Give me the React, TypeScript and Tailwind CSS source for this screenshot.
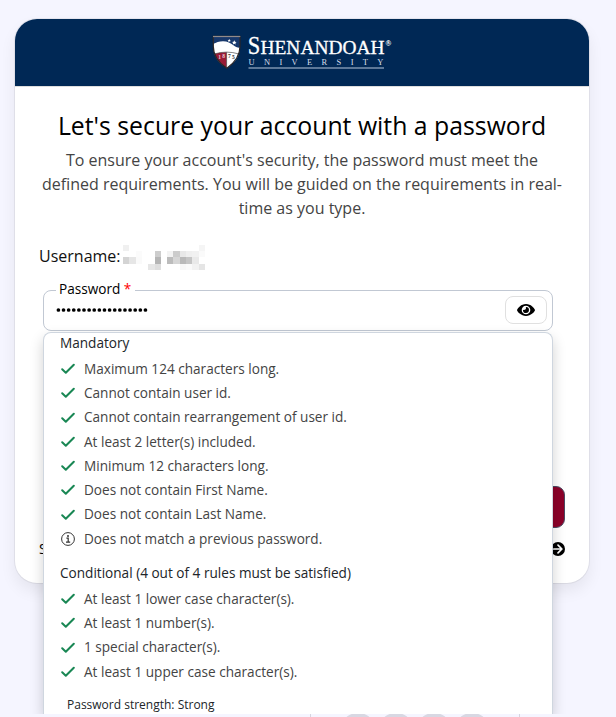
import React from "react";

const SANS = "font-['Open_Sans','Noto_Sans',sans-serif]";

type Rule = { text: string; info?: boolean };

const mandatory: Rule[] = [
  { text: "Maximum 124 characters long." },
  { text: "Cannot contain user id." },
  { text: "Cannot contain rearrangement of user id." },
  { text: "At least 2 letter(s) included." },
  { text: "Minimum 12 characters long." },
  { text: "Does not contain First Name." },
  { text: "Does not contain Last Name." },
  { text: "Does not match a previous password.", info: true },
];

const conditional: Rule[] = [
  { text: "At least 1 lower case character(s)." },
  { text: "At least 1 number(s)." },
  { text: "1 special character(s)." },
  { text: "At least 1 upper case character(s)." },
];

const pixels: [number, number, string][] = [
  [0, 0, "#f0f0f0"], [0, 2, "#d4d4d4"], [1, 2, "#e6e6e6"], [2, 2, "#fafafa"],
  [2, 1, "#fbfbfb"], [4, 3, "#e6e6e6"], [5, 3, "#dedede"], [5, 1, "#cdcdcd"], [5, 2, "#b5b5b5"],
  [7, 1, "#f3f3f3"], [7, 2, "#bcbcbc"], [8, 1, "#cccccc"], [8, 2, "#d6d6d6"],
  [9, 1, "#e8e8e8"], [9, 2, "#b9b9b9"], [10, 1, "#efefef"], [10, 2, "#c5c5c5"],
  [11, 1, "#f1f1f1"], [11, 2, "#e9e9e9"], [12, 0, "#f5f5f5"], [12, 1, "#fafafa"],
  [9, 3, "#f7f7f7"], [10, 3, "#fafafa"], [11, 3, "#f2f2f2"], [12, 3, "#e5e5e5"],
];

function Check() {
  return (
    <svg width="14" height="12" viewBox="0 0 14 12" fill="none" className="shrink-0">
      <path d="M1.200 6.200 4.800 9.700 12.800 1.700" stroke="#198754" strokeWidth="2" strokeLinecap="round" strokeLinejoin="round" />
    </svg>
  );
}

function Info() {
  return (
    <svg width="14" height="14" viewBox="0 0 14 14" fill="none" className="shrink-0">
      <circle cx="7" cy="7" r="6.400" stroke="#333" strokeWidth="1" />
      <circle cx="7" cy="3.900" r="1" fill="#333" />
      <path d="M5.400 6.200h1.800v4M5 10.200h4.200" stroke="#333" strokeWidth="1.200" />
    </svg>
  );
}

function RuleRow({ rule }: { rule: Rule }) {
  return (
    <li className="flex h-[24.25px] items-center gap-[9px] whitespace-nowrap text-[13.6px] text-[#444]">
      {rule.info ? <Info /> : <Check />}
      <span>{rule.text}</span>
    </li>
  );
}

function Logo() {
  return (
    <svg width="190" height="46" viewBox="0 -8 190 46" className="block">
      <defs>
        <clipPath id="shield">
          <path d="M1.300 1.300h26.700v10c0 11-6 17-13.200 21.900C7.500 28.500 1.300 22.500 1.300 11.300Z" />
        </clipPath>
      </defs>
      <g clipPath="url(#shield)">
        <rect width="30" height="36" fill="#fff" />
        <path d="M0 0h30v11.500c-2 1.800-4.500 1.500-7.500-.5-4-3-7-4.800-11.500-4.800C6.500 6.200 4 7.500 0 9.500Z" fill="#17386c" />
        <path d="M0 19.500Q7 17.300 14.500 17.300V36H0Z" fill="#981b36" />
        <path d="M2 19q12.500-3.800 25 0M14.600 17.300v16" stroke="#333" strokeWidth=".6" fill="none" />
        <path d="m17.200 3.800.5 1.100 1.100.1-.8.8.3 1.100-1.100-.6-1.100.6.300-1.100-.8-.8 1.100-.1ZM22.300 5.200l.7 1.500 1.600.2-1.200 1.100.3 1.600-1.400-.8-1.400.8.300-1.600-1.200-1.100 1.600-.2Z" fill="#fff" />
      </g>
      <path d="M1.300 1.300h26.700v10c0 11-6 17-13.200 21.900C7.500 28.500 1.300 22.500 1.300 11.300Z" stroke="#2a2628" strokeWidth="1.200" fill="none" />
      <path d="M1 1.500h27.300" stroke="#928b8a" strokeWidth="1.200" />
      <g fontFamily="Liberation Serif, serif" fontSize="5.500" fontWeight="bold">
        <text x="6.300" y="23.800" fill="#e8ccd2">1</text>
        <text x="10.300" y="23.300" fill="#e8ccd2">8</text>
        <text x="16" y="23.300" fill="#333">7</text>
        <text x="20" y="23.800" fill="#333">5</text>
      </g>
      <g fontFamily="Liberation Serif, serif" fill="#fff" stroke="#fff">
        <text x="35.800" y="19" fontSize="25" strokeWidth=".3" textLength="12.500" lengthAdjust="spacingAndGlyphs">S</text>
        <text x="48.500" y="19" fontSize="19" strokeWidth=".3" textLength="124" lengthAdjust="spacingAndGlyphs">HENANDOAH</text>
        <text x="173.500" y="11" fontSize="7.500" strokeWidth=".1">®</text>
      </g>
      <text x="36.500" y="30" fontFamily="Liberation Serif, serif" fontSize="8.500" fill="#d5deeb" textLength="135">UNIVERSITY</text>
      <path d="M36.500 33h135.500" stroke="#b9c8dd" strokeWidth="1" />
    </svg>
  );
}

export default function App() {
  return (
    <div className={`relative h-[717px] w-[616px] overflow-hidden bg-[#f5f5ff] pl-[15px] pt-[19px] text-black ${SANS}`}>
      <main className="relative flex h-[564px] w-[574px] flex-col rounded-[22px] bg-white shadow-[0_0_0_1px_rgba(0,0,0,0.06),0_8px_16px_rgba(0,0,0,0.07)]">
        <header className="flex h-[67px] items-start rounded-t-[22px] bg-[#002855] pl-[197px] pt-[8px]">
          <Logo />
        </header>
        <section className="border-t border-[#dedede] px-[24px] pt-[20px] text-center">
          <h1 className="h-[36px] whitespace-nowrap text-[24.8px] leading-[36px]">Let's secure your account with a password</h1>
          <div className="mt-[5px] whitespace-nowrap text-[16px] leading-[24px] text-[#444]">
            <p>To ensure your account's security, the password must meet the</p>
            <p>defined requirements. You will be guided on the requirements in real-</p>
            <p>time as you type.</p>
          </div>
        </section>
        <div className="mt-[24px] flex h-[26px] pl-[24px]">
          <span className="w-[84px] whitespace-nowrap text-[16px] leading-[24px] text-[#111]">Username:</span>
          <svg width="83" height="26" shapeRendering="crispEdges">
            {pixels.map(([x, y, color]) => (
              <rect key={`${x}-${y}`} x={x * 6.3} y={1 + y * 6.2} width="6.300" height="6.200" fill={color} />
            ))}
          </svg>
        </div>
        <div className="relative ml-[28px] mt-[20px] flex h-[41px] w-[510px] items-center justify-between rounded-[8px] border border-[#c1c8d3] pl-[12px] pr-[5px]">
          <label className="absolute left-[12px] top-[-12px] bg-white pl-[3px] pr-[4px] text-[13.6px] leading-[20px]">
            Password <span className="text-[#f00]">*</span>
          </label>
          <svg width="94" height="6" className="mb-[1px]">
            {Array.from({ length: 18 }, (_, i) => (
              <circle key={i} cx={2.4 + i * 5.12} cy="3" r="1.850" fill="#000" />
            ))}
          </svg>
          <button className="mb-px flex h-[28px] w-[42px] items-center justify-center rounded-[8px] border border-[#e0e0e0] bg-white">
            <svg width="18" height="14" viewBox="0 0 576 448">
              <path d="M288 32C207 32 143 63 96 101 49 140 18 180 3 212c-3 8-3 16 0 24 15 32 46 72 93 111 47 38 111 69 192 69s145-31 192-69c47-39 78-79 93-111 3-8 3-16 0-24-15-32-46-72-93-111C433 63 369 32 288 32Zm0 54a138 138 0 1 1 0 276 138 138 0 0 1 0-276Zm0 74c0 35-29 64-64 64-8 0-15-1-21-4-6-2-12 2-12 8a96 96 0 1 0 101-100c-6 0-10 6-8 12 3 6 4 13 4 20Z" />
            </svg>
          </button>
        </div>
        <div className="mt-[155px] flex h-[42px] justify-end pr-[24px]">
          <button className="w-[518px] rounded-[9px] border border-[#4a4c63] bg-[#8c0029]" />
        </div>
        <div className="flex h-[41px] items-center justify-between pl-[24px] pr-[24px] text-[14px]">
          <span>S</span>
          <svg width="14" height="14" viewBox="0 0 14 14">
            <circle cx="7" cy="7" r="7" />
            <path d="M2.800 7h8M7 3.200 10.900 7 7 10.800" fill="none" stroke="#fff" strokeWidth="1.700" strokeLinecap="round" strokeLinejoin="round" />
          </svg>
        </div>
      </main>

      <section className="absolute left-[43px] top-[332px] flex h-[382px] w-[510px] flex-col rounded-t-[8px] border border-b-0 border-[#cfd6df] bg-white pl-[16px] shadow-[0_6px_14px_rgba(0,0,0,0.18)]">
        <h2 className="h-[25.5px] text-[13.6px] leading-[20px] text-[#212529]">Mandatory</h2>
        <ul className="pl-[1px]">
          {mandatory.map((rule) => <RuleRow key={rule.text} rule={rule} />)}
        </ul>
        <h2 className="mt-[11.5px] h-[26px] whitespace-nowrap text-[13.6px] leading-[20px] text-[#212529]">
          Conditional (4 out of 4 rules must be satisfied)
        </h2>
        <ul className="pl-[1px]">
          {conditional.map((rule) => <RuleRow key={rule.text} rule={rule} />)}
        </ul>
        <p className="mt-[12px] pl-[7px] text-[12px] leading-[18px] text-[#212529]">Password strength: Strong</p>
      </section>

      <footer className="absolute left-0 top-[714px] h-[3px] w-full overflow-hidden bg-[#f5f5ff]">
        <div className="ml-[310px] flex w-[210px] gap-[8px] border-x border-[#d5d5df] pl-[32px]">
          {[0, 1, 2, 3].map((i) => (
            <span key={i} className="-mt-px h-[22px] w-[30px] rounded-[50%] bg-[#d8d8e3]" />
          ))}
        </div>
      </footer>
    </div>
  );
}
